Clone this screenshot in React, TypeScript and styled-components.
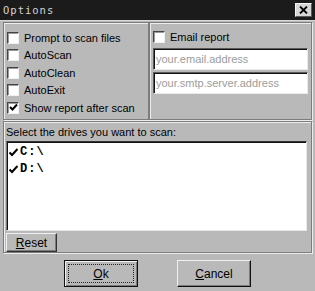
import React from "react";
import styled, { createGlobalStyle } from "styled-components";

const Global = createGlobalStyle`
  html, body { margin: 0; padding: 0; background: #b9b9b9; }
  * { box-sizing: border-box; }
`;

const Window = styled.div`
  width: 315px;
  height: 291px;
  background: #b9b9b9;
  font-family: "Liberation Sans", Arial, sans-serif;
  font-size: 11px;
  color: #000;
  display: flex;
  flex-direction: column;
  overflow: hidden;
`;

const TitleBar = styled.div`
  height: 21px;
  background: #1b1b1b;
  border-bottom: 1px solid #d8d8d8;
  display: flex;
  align-items: center;
  justify-content: space-between;
  padding: 0 3px 0 3px;
`;

const Title = styled.span`
  font-family: "DejaVu Sans Mono", monospace;
  font-size: 10.5px;
  letter-spacing: 1px;
  color: #d4d4d4;
`;

const CloseBtn = styled.div`
  width: 17px;
  height: 14px;
  background: #d6d6d6;
  border-top: 1px solid #f4f4f4;
  border-left: 1px solid #f4f4f4;
  border-right: 1px solid #5a5a5a;
  border-bottom: 1px solid #5a5a5a;
  display: flex;
  align-items: center;
  justify-content: center;
`;

const Body = styled.div`
  padding: 1px 3px 0 3px;
  display: flex;
  flex-direction: column;
`;

const TopRow = styled.div`
  display: grid;
  grid-template-columns: 146px 1fr;
  height: 98px;
`;

const Group = styled.div`
  border: 1px solid #7c7c7c;
  box-shadow: inset 1px 1px 0 #ececec, 1px 1px 0 #ececec;
`;

const LeftGroup = styled(Group)`
  padding: 6px 0 0 3px;
  display: flex;
  flex-direction: column;
`;

const RightGroup = styled(Group)`
  padding: 5px 3px 0 3px;
  display: flex;
  flex-direction: column;
`;

const CheckRow = styled.label`
  display: flex;
  align-items: center;
  height: 17.5px;
  gap: 5px;
`;

const Box = styled.span`
  width: 12px;
  height: 12px;
  background: #fff;
  border-top: 1px solid #444;
  border-left: 1px solid #444;
  border-right: 1px solid #f0f0f0;
  border-bottom: 1px solid #f0f0f0;
  box-shadow: inset 1px 1px 0 #9a9a9a;
  display: flex;
  align-items: center;
  justify-content: center;
  flex-shrink: 0;
`;

const Field = styled.div`
  height: 22px;
  background: #fff;
  border-top: 1px solid #5a5a5a;
  border-left: 1px solid #5a5a5a;
  border-right: 1px solid #eaeaea;
  border-bottom: 1px solid #eaeaea;
  box-shadow: inset 1px 1px 0 #111;
  display: flex;
  align-items: center;
  padding-left: 2px;
  color: #9c9c9c;
  margin-top: 2px;
`;

const DrivesGroup = styled(Group)`
  margin-top: 1px;
  height: 132px;
  display: flex;
  flex-direction: column;
  padding: 3px 2px 0 2px;
`;

const Label = styled.div`
  height: 16px;
  line-height: 14px;
`;

const List = styled.div`
  height: 92px;
  background: #fff;
  border-top: 1px solid #333;
  border-left: 1px solid #7a7a7a;
  border-right: 1px solid #e8e8e8;
  border-bottom: 1px solid #e8e8e8;
  box-shadow: inset 1px 1px 0 #111;
  padding: 2px 0 0 2px;
  margin-right: 2px;
`;

const Drive = styled.div`
  display: flex;
  align-items: center;
  height: 17px;
  font-family: "Liberation Mono", monospace;
  font-weight: bold;
  font-size: 12px;
  letter-spacing: 1px;
  gap: 2px;
`;

const SmallButton = styled.div`
  width: 51px;
  height: 19px;
  margin-top: 2px;
  background: #b9b9b9;
  border-top: 1px solid #f0f0f0;
  border-left: 1px solid #f0f0f0;
  border-right: 1px solid #333;
  border-bottom: 1px solid #333;
  box-shadow: inset -1px -1px 0 #7a7a7a;
  display: flex;
  align-items: center;
  justify-content: center;
  font-size: 12px;
`;

const ButtonRow = styled.div`
  display: flex;
  padding: 7px 0 0 61px;
  gap: 39px;
`;

const DialogButton = styled.div<{ $default?: boolean }>`
  width: 74px;
  height: 27px;
  background: #b9b9b9;
  border-top: 1px solid ${(p) => (p.$default ? "#111" : "#f0f0f0")};
  border-left: 1px solid ${(p) => (p.$default ? "#111" : "#f0f0f0")};
  border-right: 1px solid #111;
  border-bottom: 1px solid #111;
  box-shadow: ${(p) =>
    p.$default
      ? "inset 1px 1px 0 #f0f0f0, inset -1px -1px 0 #7a7a7a"
      : "inset -1px -1px 0 #7a7a7a"};
  display: flex;
  align-items: center;
  justify-content: center;
  padding: 3px;
  font-size: 12px;
`;

const Focus = styled.div<{ $on?: boolean }>`
  width: 100%;
  height: 100%;
  display: flex;
  align-items: center;
  justify-content: center;
  border: 1px dotted ${(p) => (p.$on ? "#222" : "transparent")};
`;

const U = styled.span`
  text-decoration: underline;
`;

const Check = () => (
  <svg width="9" height="9" viewBox="0 0 9 9">
    <path d="M1 4 L3.5 6.5 L8 1.5" stroke="#000" strokeWidth="2" fill="none" />
  </svg>
);

const Tick = () => (
  <svg width="9" height="9" viewBox="0 0 9 9">
    <path d="M0.5 4.5 L3 7 L8.5 1" stroke="#000" strokeWidth="2" fill="none" />
  </svg>
);

const CheckItem = ({ label, checked }: { label: string; checked?: boolean }) => (
  <CheckRow>
    <Box>{checked && <Check />}</Box>
    <span>{label}</span>
  </CheckRow>
);

export default function App() {
  return (
    <>
      <Global />
      <Window>
        <TitleBar>
          <Title>Options</Title>
          <CloseBtn>
            <svg width="9" height="8" viewBox="0 0 9 8">
              <path d="M1 0.5 L8 7.5 M8 0.5 L1 7.5" stroke="#000" strokeWidth="1.8" />
            </svg>
          </CloseBtn>
        </TitleBar>
        <Body>
          <TopRow>
            <LeftGroup>
              <CheckItem label="Prompt to scan files" />
              <CheckItem label="AutoScan" />
              <CheckItem label="AutoClean" />
              <CheckItem label="AutoExit" />
              <CheckItem label="Show report after scan" checked />
            </LeftGroup>
            <RightGroup>
              <CheckItem label="Email report" />
              <Field>your.email.address</Field>
              <Field>your.smtp.server.address</Field>
            </RightGroup>
          </TopRow>
          <DrivesGroup>
            <Label>Select the drives you want to scan:</Label>
            <List>
              <Drive>
                <Tick />
                <span>C:\</span>
              </Drive>
              <Drive>
                <Tick />
                <span>D:\</span>
              </Drive>
            </List>
            <SmallButton>
              <span>
                <U>R</U>eset
              </span>
            </SmallButton>
          </DrivesGroup>
          <ButtonRow>
            <DialogButton $default>
              <Focus $on>
                <span>
                  <U>O</U>k
                </span>
              </Focus>
            </DialogButton>
            <DialogButton>
              <Focus>
                <span>
                  <U>C</U>ancel
                </span>
              </Focus>
            </DialogButton>
          </ButtonRow>
        </Body>
      </Window>
    </>
  );
}
